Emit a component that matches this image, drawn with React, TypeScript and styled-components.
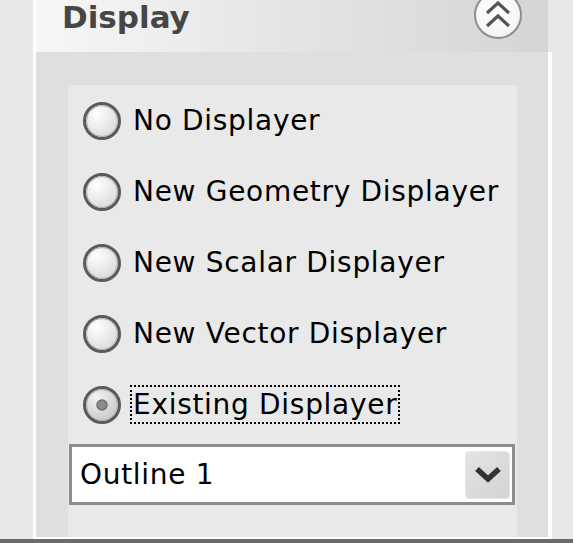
import React from 'react';
import styled, { createGlobalStyle } from 'styled-components';

const GlobalStyle = createGlobalStyle`
  html, body {
    margin: 0;
    padding: 0;
    background: #e8e8e8;
  }
  * {
    box-sizing: border-box;
  }
`;

const options = [
  'No Displayer',
  'New Geometry Displayer',
  'New Scalar Displayer',
  'New Vector Displayer',
  'Existing Displayer',
];

const RadioMark: React.FC<{ checked?: boolean }> = ({ checked }) => (
  <svg width='40' height='40' viewBox='0 0 40 40'>
    <defs>
      <radialGradient id='rfill' cx='0.35' cy='0.3' r='0.8'>
        <stop offset='0' stopColor='#ffffff' />
        <stop offset='1' stopColor='#d6d6d6' />
      </radialGradient>
      <radialGradient id='rfillOn' cx='0.35' cy='0.3' r='0.8'>
        <stop offset='0' stopColor='#f2f2f2' />
        <stop offset='1' stopColor='#c4c4c4' />
      </radialGradient>
    </defs>
    <circle
      cx='20'
      cy='20'
      r='17.5'
      fill={checked ? 'url(#rfillOn)' : 'url(#rfill)'}
      stroke='#5a5a5a'
      strokeWidth='3'
    />
    <circle cx='20' cy='20' r='15.5' fill='none' stroke='#b0b0b0' strokeWidth='1' />
    {checked && <circle cx='20' cy='20' r='5' fill='#8c8c8c' stroke='#6d6d6d' strokeWidth='1.5' />}
  </svg>
);

const App: React.FC = () => {
  const selected = 4;
  return (
    <Page>
      <GlobalStyle />
      <Main>
        <Panel>
          <Header>
            <Title>Display</Title>
            <CollapseButton aria-label='collapse'>
              <svg width='28' height='28' viewBox='0 0 28 28'>
                <path d='M3 12 L14 2 L25 12' fill='none' stroke='#555' strokeWidth='3.2' />
                <path d='M3 25 L14 15 L25 25' fill='none' stroke='#555' strokeWidth='3.2' />
              </svg>
            </CollapseButton>
          </Header>
          <Body>
            <Group>
              {options.map((label, i) => (
                <Row key={label}>
                  <RadioMark checked={i === selected} />
                  <Label focused={i === selected}>{label}</Label>
                </Row>
              ))}
              <Combo>
                <ComboText>Outline 1</ComboText>
                <DropButton>
                  <svg width='30' height='20' viewBox='0 0 30 20'>
                    <path d='M4 4 L15 14 L26 4' fill='none' stroke='#333' strokeWidth='5.5' />
                  </svg>
                </DropButton>
              </Combo>
            </Group>
          </Body>
        </Panel>
      </Main>
      <BottomLine />
    </Page>
  );
};

const Page = styled.div`
  height: 543px;
  display: flex;
  flex-direction: column;
  background: #e8e8e8;
  overflow: hidden;
`;
const Main = styled.div`
  flex: 1;
  display: flex;
  padding-left: 33px;
  min-height: 0;
`;
const Panel = styled.section`
  width: 519px;
  display: flex;
  flex-direction: column;
  border-left: 3px solid #ffffff;
  border-bottom: 2px solid #ffffff;
`;
const Header = styled.div`
  height: 52px;
  margin-right: 4px;
  display: flex;
  justify-content: space-between;
  align-items: flex-start;
  padding: 2px 26px 0 26px;
  background: linear-gradient(to right, #f7f7f7 0%, #e6e6e6 45%, #d5d5d5 100%);
`;
const Title = styled.h2`
  margin: 0;
  font-family: 'DejaVu Sans', Verdana, sans-serif;
  font-weight: bold;
  font-size: 31px;
  line-height: 31px;
  color: #464646;
`;
const CollapseButton = styled.div`
  width: 48px;
  height: 48px;
  margin-top: -11px;
  border-radius: 50%;
  border: 2px solid #8e8e8e;
  background: radial-gradient(circle at 45% 40%, #ffffff 0%, #f7f7f7 60%, #e2e2e2 100%);
  display: flex;
  align-items: flex-end;
  justify-content: center;
  padding-bottom: 8px;
`;
const Body = styled.div`
  flex: 1;
  display: flex;
  flex-direction: column;
  padding: 33px 31px 0 32px;
  background: #dfdfdf;
  border-right: 4px solid #ffffff;
`;
const Group = styled.div`
  flex: 1;
  display: flex;
  flex-direction: column;
  background: #e9e9e9;
`;
const Row = styled.div`
  height: 71px;
  display: flex;
  align-items: center;
  gap: 8px;
  padding-left: 14px;
`;
const Label = styled.span<{ focused?: boolean }>`
  font-family: 'DejaVu Sans', Verdana, sans-serif;
  font-size: 28px;
  letter-spacing: 0.7px;
  line-height: 35px;
  color: #000;
  padding: 0 1px;
  border: 2px ${(p) => (p.focused ? 'dotted #000' : 'solid transparent')};
`;
const Combo = styled.div`
  height: 61px;
  margin: 4px 2px 0 1px;
  display: flex;
  align-items: center;
  justify-content: space-between;
  padding: 0 2px 0 8px;
  background: #ffffff;
  border: 3px solid #8d8d8d;
`;
const ComboText = styled.span`
  font-family: 'DejaVu Sans', Verdana, sans-serif;
  font-size: 28px;
  letter-spacing: 0.7px;
  color: #000;
`;
const DropButton = styled.div`
  width: 45px;
  height: 48px;
  border-radius: 4px;
  background: linear-gradient(135deg, #e4e4e4 0%, #d3d3d3 100%);
  border: 1px solid #e6e6e6;
  display: flex;
  align-items: center;
  justify-content: center;
`;
const BottomLine = styled.div`
  height: 4px;
  background: #6b6b6b;
`;

export default App;
